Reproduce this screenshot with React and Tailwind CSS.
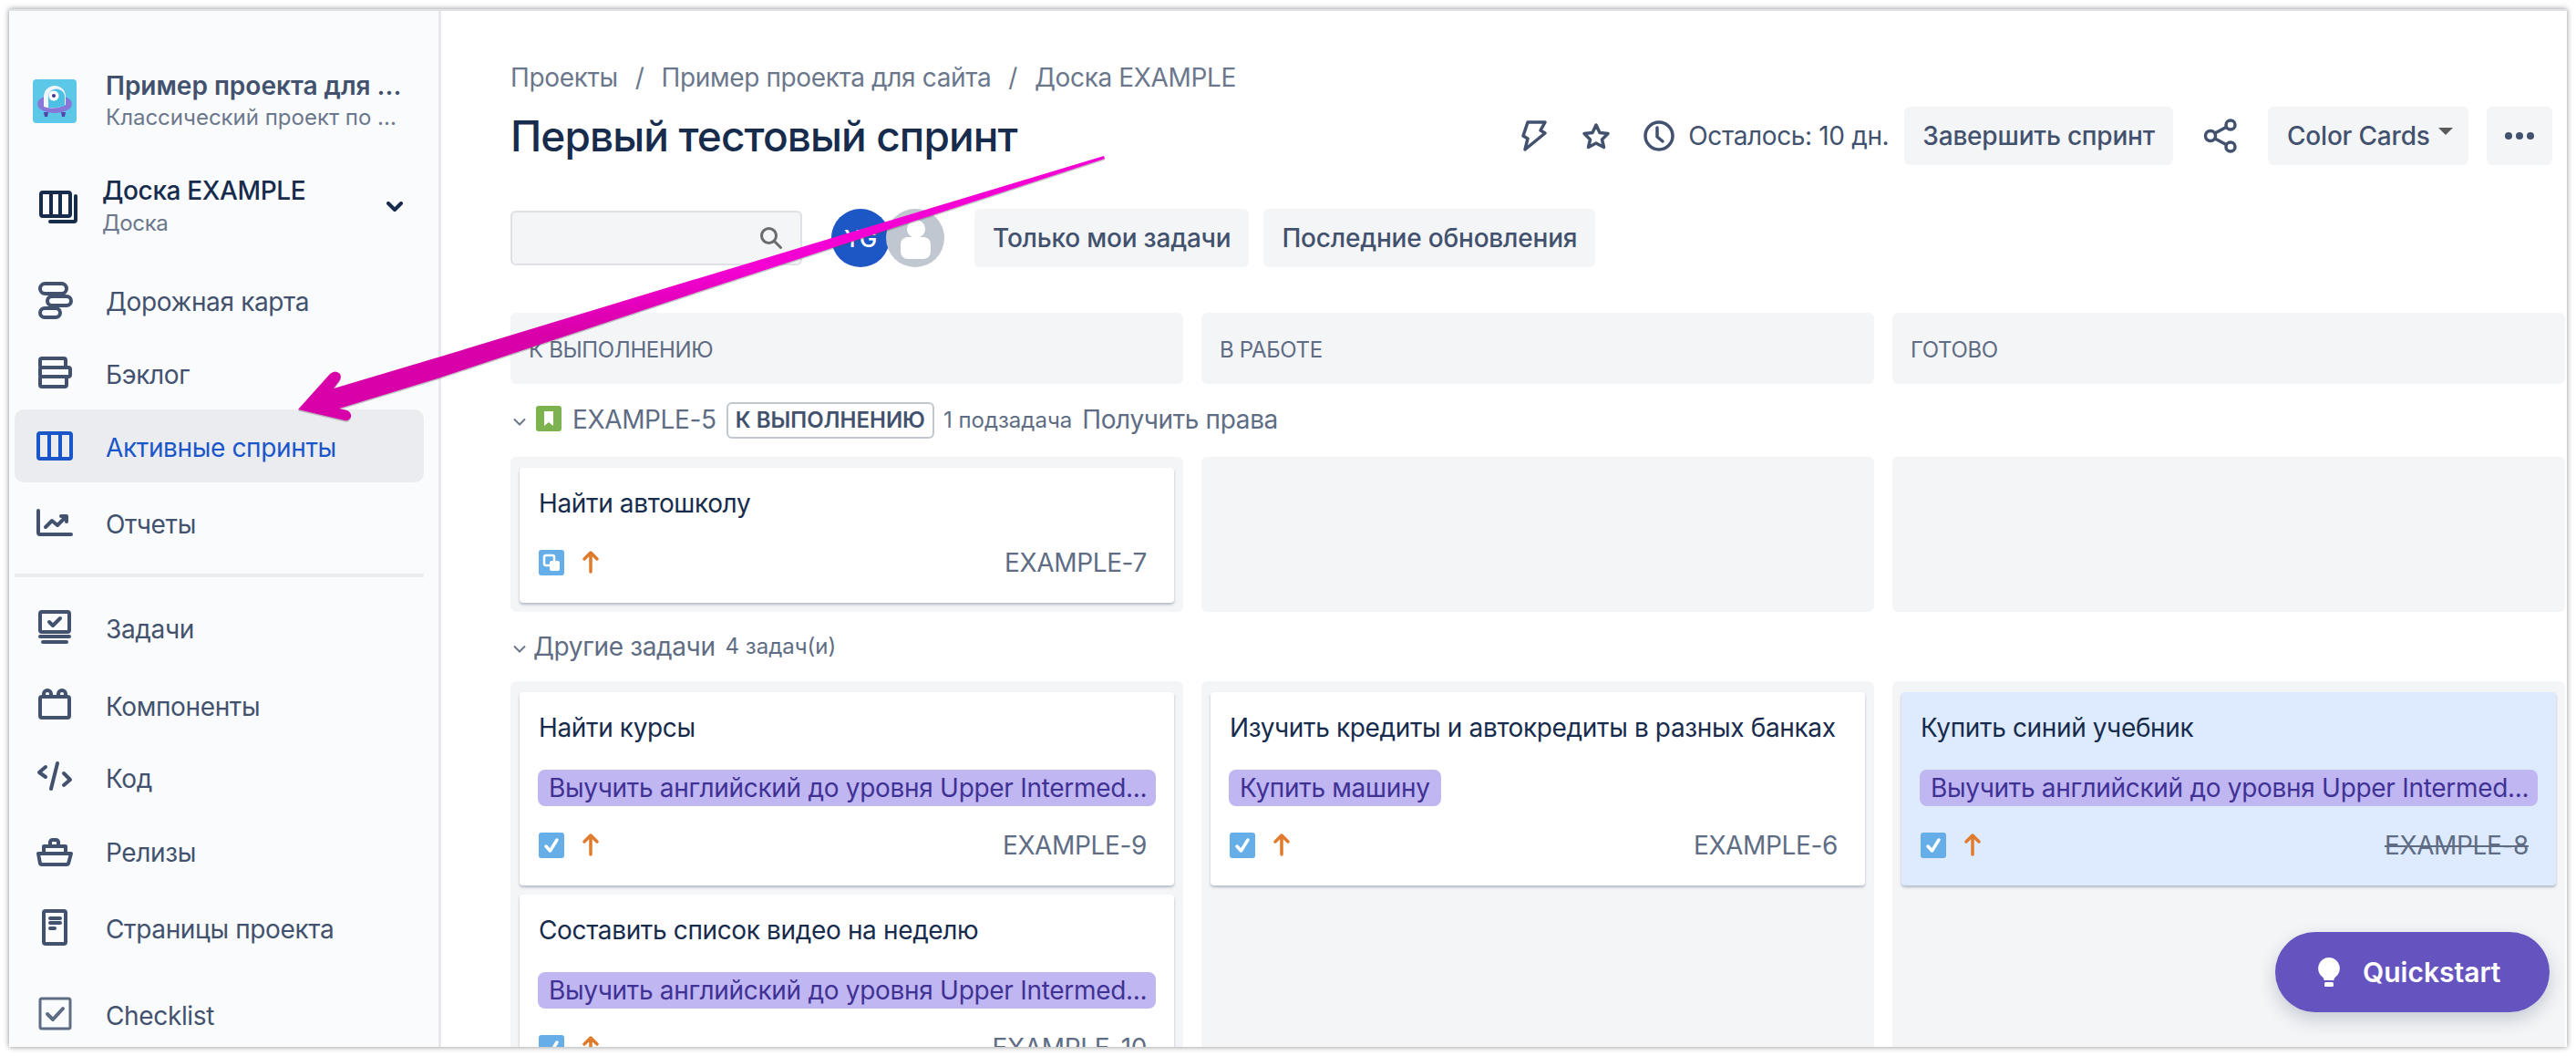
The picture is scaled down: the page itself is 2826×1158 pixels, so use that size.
const ink = '#42526e'

function Ico({ children, color = ink, size = 48, className = '' }) {
  return (
    <svg width={size} height={size} viewBox={`0 0 ${size} ${size}`} fill="none" stroke={color} strokeWidth="4" strokeLinecap="round" strokeLinejoin="round" className={`shrink-0 ${className}`}>
      {children}
    </svg>
  )
}

const navTop = [
  {
    label: 'Дорожная карта', cls: 'mt-[22px]',
    icon: <><rect x="8" y="6" width="29" height="11" rx="5.5" /><rect x="16" y="20" width="26" height="10" rx="5" /><rect x="8" y="33" width="22" height="10" rx="5" /></>,
  },
  {
    label: 'Бэклог', cls: '',
    icon: <><rect x="8" y="8" width="28" height="10" rx="2" /><rect x="8" y="18" width="33" height="10" rx="2" /><rect x="8" y="28" width="29" height="11" rx="2" /></>,
  },
  {
    label: 'Активные спринты', active: true, cls: 'bg-[#ebecf0]',
    icon: <><rect x="6" y="10" width="36" height="28" rx="2" /><path d="M18 10v28M30 10v28" /></>,
  },
  {
    label: 'Отчеты', cls: 'mt-[4px]',
    icon: <><path d="M6 11v24a2 2 0 0 0 2 2h34" /><path d="M14 29l7-7 6 5 9-9" /><path d="M31 17h6v6" /></>,
  },
]

const navBottom = [
  {
    label: 'Задачи', cls: 'mt-[15px]',
    icon: <><rect x="8" y="7" width="32" height="22" rx="2" /><path d="M18 18l4 4 8-8" /><path d="M8 34h32" /><path d="M11 40h26" /></>,
  },
  {
    label: 'Компоненты', cls: 'mt-[5px]',
    icon: <><rect x="8" y="15" width="32" height="23" rx="2" /><path d="M12 14v-2a3 3 0 0 1 8 0v2M28 14v-2a3 3 0 0 1 8 0v2" /></>,
  },
  {
    label: 'Код', cls: '-mt-[1px]',
    icon: <><path d="M14 13l-7 6 7 5" /><path d="M27 9l-7 28" /><path d="M34 20l7 7-7 6" /></>,
  },
  {
    label: 'Релизы', cls: 'mt-[1px]',
    icon: <><path d="M6 27h36l-3 11a2 2 0 0 1-2 1H10a2 2 0 0 1-2-1z" /><path d="M12 26v-7h24v7" /><path d="M19 18v-4a3 3 0 0 1 3-2h3a3 3 0 0 1 3 2v4" /></>,
  },
  {
    label: 'Страницы проекта', cls: 'mt-[4px]',
    icon: <><rect x="12" y="6" width="24" height="36" rx="2" /><path d="M19 14h11M19 19h11M19 25h5" /></>,
  },
  {
    label: 'Checklist', cls: 'mt-[15px]',
    color: '#5e6c84',
    icon: <><rect x="8" y="7" width="33" height="33" rx="2" strokeWidth="3" /><path d="M16 24l6 6 11-12" /></>,
  },
]

function NavRow({ item }) {
  return (
    <div className={`h-[80px] shrink-0 flex items-center pl-[20px] gap-[32px] rounded-[10px] ${item.cls}`}>
      <Ico color={item.active ? '#1a56c9' : item.color || ink}>{item.icon}</Ico>
      <span className={`text-[28px] pt-[3px] ${item.active ? 'text-[#1a56c9]' : 'text-[#42526e]'}`}>{item.label}</span>
    </div>
  )
}

function Sidebar() {
  return (
    <div className="w-[474px] shrink-0 h-full bg-[#fafbfc] border-r-[3px] border-[#e8e9ec] pt-[75px] pl-[6px] pr-[16px] flex flex-col">
      <div className="h-[48px] flex items-center pl-[20px] gap-[32px]">
        <svg width="48" height="48" viewBox="0 0 48 48" className="shrink-0">
          <rect width="48" height="48" rx="4" fill="#5cc7e6" />
          <path d="M12 36h5l-1 5h-3zM31 36h5l-1 5h-3z" fill="#5243aa" />
          <ellipse cx="24" cy="27" rx="19" ry="10" fill="#8777d9" />
          <path d="M12 30V19a12 12 0 0 1 24 0v9q-12 6-24 2z" fill="#f2f5fb" />
          <path d="M17 31V19a9 9 0 0 1 14-7q4 3 4 7v10q-9 3-18 2z" fill="#4cc0e4" />
          <circle cx="23" cy="18" r="5.5" fill="#fff" />
          <circle cx="23" cy="18" r="2" fill="#403294" />
        </svg>
        <div className="flex flex-col whitespace-nowrap tracking-normal">
          <span className="text-[28px] leading-[36px] font-semibold text-[#42526e]">Пример проекта для ...</span>
          <span className="text-[24px] leading-[34px] text-[#6b778c]">Классический проект по ...</span>
        </div>
      </div>

      <div className="h-[80px] mt-[52px] shrink-0 flex items-center pl-[27px]">
        <svg width="42" height="36" viewBox="0 0 42 36" fill="none" stroke="#172b4d" strokeWidth="4" className="shrink-0">
          <rect x="2" y="2" width="32" height="26" rx="2" />
          <path d="M13 2v26M23 2v26" />
          <path d="M40 6v26a2 2 0 0 1-2 2H12" strokeLinecap="round" />
        </svg>
        <div className="flex flex-col ml-[27px] whitespace-nowrap">
          <span className="text-[28px] leading-[36px] font-medium text-[#172b4d]">Доска EXAMPLE</span>
          <span className="text-[24px] leading-[36px] text-[#6b778c]">Доска</span>
        </div>
        <svg width="18" height="12" viewBox="0 0 18 12" fill="none" stroke="#172b4d" strokeWidth="4" strokeLinecap="round" strokeLinejoin="round" className="ml-auto mr-[23px]">
          <path d="M2 2l7 7 7-7" />
        </svg>
      </div>

      {navTop.map((item) => <NavRow key={item.label} item={item} />)}
      <div className="h-[4px] mt-[16px] shrink-0 bg-[#ebecf0]" />
      {navBottom.map((item) => <NavRow key={item.label} item={item} />)}
    </div>
  )
}

function Btn({ children, className = '' }) {
  return (
    <div className={`h-[64px] flex items-center rounded-[6px] bg-[#f4f5f7] text-[28px] font-medium tracking-[-0.2px] text-[#42526e] whitespace-nowrap ${className}`}>
      {children}
    </div>
  )
}

function Header() {
  return (
    <>
      <div className="h-[40px] mt-[53px] flex items-center text-[28px] text-[#6b778c] whitespace-nowrap">
        <span>Проекты</span>
        <span className="mx-[19px]">/</span>
        <span>Пример проекта для сайта</span>
        <span className="mx-[19px]">/</span>
        <span>Доска EXAMPLE</span>
      </div>

      <div className="h-[64px] mt-[12px] flex items-center pr-[16px]">
        <h1 className="text-[46px] font-medium tracking-[-0.9px] text-[#172b4d] whitespace-nowrap">Первый тестовый спринт</h1>
        <svg width="32" height="36" viewBox="0 0 32 36" fill="none" stroke={ink} strokeWidth="3.5" strokeLinejoin="round" strokeLinecap="round" className="ml-auto">
          <path d="M9 3h19l-5 9 5 3L6 33l3-12-5-3z" />
        </svg>
        <svg width="32" height="30" viewBox="0 0 32 30" fill="none" stroke={ink} strokeWidth="3.5" strokeLinejoin="round" className="ml-[36px]">
          <path d="M16 3l4 8.5 9 1-6.5 6.5 2 8.5-8.5-4.500L7.500 27.500l2-8.500L3 12.500l9-1z" />
        </svg>
        <svg width="34" height="34" viewBox="0 0 34 34" fill="none" stroke={ink} strokeWidth="3.5" strokeLinecap="round" strokeLinejoin="round" className="ml-[36px]">
          <circle cx="17" cy="17" r="15" />
          <path d="M15 8v10l6 5" />
        </svg>
        <span className="text-[28px] text-[#42526e] ml-[15px] whitespace-nowrap">Осталось: 10 дн.</span>
        <Btn className="ml-[17px] px-[20px]">Завершить спринт</Btn>
        <svg width="38" height="38" viewBox="0 0 38 38" fill="none" stroke={ink} strokeWidth="3.5" className="ml-[33px]">
          <circle cx="8" cy="19" r="5.5" />
          <circle cx="30" cy="7" r="5" />
          <circle cx="30" cy="31" r="5" />
          <path d="M13 16l13-7M13 22l13 7" />
        </svg>
        <Btn className="ml-[33px] pl-[21px] w-[220px]">
          Color Cards
          <span className="ml-[9px] mb-[10px] w-0 h-0 border-x-[8px] border-x-transparent border-t-[8px] border-t-[#5b5b5b]" />
        </Btn>
        <Btn className="ml-[20px] w-[72px] justify-center gap-[4px]">
          <span className="w-[8px] h-[8px] rounded-full bg-[#42526e]" />
          <span className="w-[8px] h-[8px] rounded-full bg-[#42526e]" />
          <span className="w-[8px] h-[8px] rounded-full bg-[#42526e]" />
        </Btn>
      </div>

      <div className="h-[64px] mt-[48px] flex items-center">
        <div className="w-[320px] h-[60px] rounded-[6px] border-2 border-[#dfe1e6] bg-[#f4f5f7] flex items-center justify-end pr-[19px]">
          <svg width="26" height="26" viewBox="0 0 26 26" fill="none" stroke="#6b6b6b" strokeWidth="3" strokeLinecap="round">
            <circle cx="10.5" cy="10.5" r="8" />
            <path d="M16.5 16.5l7 7" />
          </svg>
        </div>
        <div className="w-[64px] h-[64px] ml-[32px] rounded-full bg-[#1d56c5] flex items-center justify-center text-[26px] font-medium text-white">YG</div>
        <svg width="64" height="64" viewBox="0 0 64 64" className="-ml-[4px] shrink-0">
          <circle cx="32" cy="32" r="32" fill="#c1c7d0" />
          <circle cx="33" cy="22" r="10" fill="#fff" />
          <rect x="16" y="31" width="33" height="24" rx="8" fill="#fff" />
        </svg>
        <Btn className="ml-[33px] px-[20px]">Только мои задачи</Btn>
        <Btn className="ml-[16px] px-[20px]">Последние обновления</Btn>
      </div>
    </>
  )
}

function TaskIcon({ sub }) {
  return (
    <svg width="28" height="28" viewBox="0 0 28 28" className="shrink-0">
      <rect width="28" height="28" rx="3" fill="#65aee8" />
      {sub ? (
        <>
          <rect x="6" y="6" width="11" height="11" rx="2" fill="none" stroke="#fff" strokeWidth="2.5" />
          <rect x="12" y="12" width="11" height="11" rx="2" fill="#fff" />
        </>
      ) : (
        <path d="M8 15l4.5 5L20 8" fill="none" stroke="#fff" strokeWidth="3.5" strokeLinecap="round" strokeLinejoin="round" />
      )}
    </svg>
  )
}

function UpArrow() {
  return (
    <svg width="20" height="26" viewBox="0 0 20 26" fill="none" stroke="#e07b2e" strokeWidth="3.5" strokeLinecap="round" strokeLinejoin="round" className="ml-[19px] mb-[3px] shrink-0">
      <path d="M10 24V3M3 10l7-7 7 7" />
    </svg>
  )
}

function Card({ title, epic, id, sub, done, className = '' }) {
  return (
    <div className={`rounded-[4px] pl-[21px] pr-[30px] pt-[19px] shadow-[0_2px_3px_rgba(9,30,66,0.28)] ${done ? 'bg-[#deebff]' : 'bg-white'} ${epic ? 'h-[212px]' : 'h-[148px]'} ${className}`}>
      <div className="h-[40px] flex items-center text-[28px] text-[#172b4d] whitespace-nowrap">{title}</div>
      {epic && (
        <div className="mt-[26px] -ml-[1px] -mr-[10px] flex">
          <span className="h-[40px] max-w-full rounded-[8px] bg-[#c0b6f2] px-[12px] flex items-center text-[28px] tracking-[-0.3px] text-[#403294] whitespace-nowrap">{epic}</span>
        </div>
      )}
      <div className={`h-[40px] flex items-center ${epic ? 'mt-[23px]' : 'mt-[25px]'}`}>
        <TaskIcon sub={sub} />
        <UpArrow />
        <span className={`ml-auto text-[28px] text-[#5e6c84] ${done ? 'line-through' : ''}`}>{id}</span>
      </div>
    </div>
  )
}

const epicLong = 'Выучить английский до уровня Upper Intermed...'

function Board() {
  return (
    <>
      <div className="grid grid-cols-[738px_738px_738px] gap-[20px] mt-[50px]">
        {['К ВЫПОЛНЕНИЮ', 'В РАБОТЕ', 'ГОТОВО'].map((name) => (
          <div key={name} className="h-[78px] rounded-[6px] bg-[#f4f5f7] px-[20px] pt-[4px] flex items-center text-[24px] text-[#5e6c84]">{name}</div>
        ))}
      </div>

      <div className="h-[40px] mt-[20px] flex items-center whitespace-nowrap">
        <svg width="14" height="10" viewBox="0 0 14 10" fill="none" stroke="#6b778c" strokeWidth="2" className="ml-[3px] mt-[4px] shrink-0"><path d="M1 1.5l6 6 6-6" /></svg>
        <svg width="28" height="28" viewBox="0 0 28 28" className="ml-[11px] mb-[4px] shrink-0">
          <rect width="28" height="28" rx="3" fill="#7cb34f" />
          <path d="M9 6h10v16l-5-4-5 4z" fill="#fff" />
        </svg>
        <span className="ml-[12px] mb-[3px] text-[28px] text-[#5e6c84]">EXAMPLE-5</span>
        <span className="ml-[11px] h-[40px] px-[8px] flex items-center rounded-[6px] border-2 border-[#c1c7d0] text-[24px] font-semibold tracking-normal text-[#42526e]">К ВЫПОЛНЕНИЮ</span>
        <span className="ml-[10px] text-[24px] tracking-normal text-[#5e6c84]">1 подзадача</span>
        <span className="ml-[11px] mb-[2px] text-[28px] text-[#5e6c84]">Получить права</span>
      </div>

      <div className="grid grid-cols-[738px_738px_738px] gap-[20px] mt-[20px]">
        <div className="h-[170px] rounded-[6px] bg-[#f4f5f7] pt-[12px] px-[10px]">
          <Card title="Найти автошколу" id="EXAMPLE-7" sub />
        </div>
        <div className="h-[170px] rounded-[6px] bg-[#f4f5f7]" />
        <div className="h-[170px] rounded-[6px] bg-[#f4f5f7]" />
      </div>

      <div className="h-[40px] mt-[18px] mb-[3px] flex items-center whitespace-nowrap text-[#5e6c84]">
        <svg width="14" height="10" viewBox="0 0 14 10" fill="none" stroke="#6b778c" strokeWidth="2" className="ml-[3px] mt-[6px] shrink-0"><path d="M1 1.5l6 6 6-6" /></svg>
        <span className="ml-[8px] text-[28px]">Другие задачи</span>
        <span className="ml-[11px] text-[24px] tracking-normal">4 задач(и)</span>
      </div>

      <div className="grid grid-cols-[738px_738px_738px] gap-[20px] mt-[15px] flex-1 min-h-0">
        <div className="rounded-t-[6px] bg-[#f4f5f7] pt-[12px] px-[10px] flex flex-col gap-[10px]">
          <Card title="Найти курсы" epic={epicLong} id="EXAMPLE-9" className="shrink-0" />
          <Card title="Составить список видео на неделю" epic={epicLong} id="EXAMPLE-10" className="shrink-0" />
        </div>
        <div className="rounded-t-[6px] bg-[#f4f5f7] pt-[12px] px-[10px]">
          <Card title="Изучить кредиты и автокредиты в разных банках" epic="Купить машину" id="EXAMPLE-6" />
        </div>
        <div className="rounded-t-[6px] bg-[#f4f5f7] pt-[12px] px-[10px]">
          <Card title="Купить синий учебник" epic={epicLong} id="EXAMPLE-8" done />
        </div>
      </div>
    </>
  )
}

const arrowShape = 'M327 449 L362 410 Q368 405 373 410 Q375 414 372 418 L366 426 L480 392 L717 320 L1211 171 L1212 174 L766 320 L480 415 L372 448 L381 450 Q386 453 385 457 Q383 462 378 461 Z'

export default function App() {
  return (
    <div className="w-[2826px] h-[1158px] bg-white p-[10px] overflow-hidden relative tracking-[-0.36px]" style={{ fontFamily: 'Inter, "Noto Sans", sans-serif' }}>
      <div className="relative h-full w-full flex overflow-hidden border-t-2 border-[#dfe1e6] shadow-[0_0_6px_rgba(0,0,0,0.45)] bg-white">
        <Sidebar />
        <main className="flex-1 min-w-0 h-full flex flex-col pl-[76px] overflow-hidden">
          <Header />
          <Board />
        </main>
        {/* активная вкладка сверху */}
        <div className="absolute -top-[2px] left-[607px] w-[122px] h-[2px] bg-[#1d56c5]" />
      </div>

      <button className="absolute left-[2496px] top-[1022px] w-[301px] h-[88px] rounded-full bg-[#6554c0] shadow-[0_8px_20px_rgba(9,30,66,0.2)] flex items-center pl-[46px] text-[30px] font-semibold tracking-normal text-white">
        <svg width="26" height="34" viewBox="0 0 26 34" className="shrink-0">
          <path d="M13 1a12 12 0 0 0-7 21.600c1 .8 1.500 1.800 1.500 3v.4h11v-.4c0-1.200.5-2.200 1.500-3A12 12 0 0 0 13 1z" fill="#fff" />
          <rect x="8" y="28" width="10" height="5" rx="1.500" fill="#fff" />
        </svg>
        <span className="ml-[24px]">Quickstart</span>
      </button>

      {/* стрелка-аннотация поверх страницы */}
      <svg width="2826" height="1158" viewBox="0 0 2826 1158" className="absolute inset-0 pointer-events-none">
        <defs>
          <linearGradient id="arrowFill" x1="0.45" y1="0.45" x2="0.5" y2="0.62">
            <stop offset="0" stopColor="#f400d4" />
            <stop offset="1" stopColor="#d800a8" />
          </linearGradient>
        </defs>
        <path d={arrowShape} fill="#555" opacity="0.35" transform="translate(0 1.5)" />
        <path d={arrowShape} fill="url(#arrowFill)" />
      </svg>
    </div>
  )
}
